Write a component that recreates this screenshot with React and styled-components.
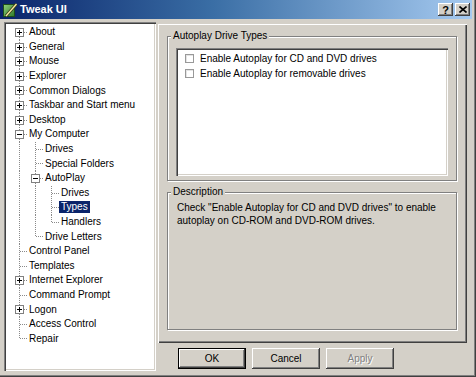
import React from "react";
import styled, { createGlobalStyle, css } from "styled-components";

const ROW_H = 14.6;
const FONT = `"Liberation Sans", Arial, sans-serif`;

const GlobalStyle = createGlobalStyle`
  html, body {
    margin: 0;
    padding: 0;
    background: #d4d0c8;
  }
  body {
    font-family: ${FONT};
    font-size: 10px;
    color: #000;
  }
`;

const Window = styled.div`
  width: 476px;
  height: 377px;
  box-sizing: border-box;
  background: #d4d0c8;
  display: flex;
  flex-direction: column;
  padding: 0 4px 3px 0;
  box-shadow: inset -1px -1px 0 #404040, inset -2px -2px 0 #808080;
`;

const TitleBar = styled.div`
  height: 19px;
  flex: none;
  display: flex;
  align-items: center;
  gap: 2px;
  padding: 0 2px 0 2px;
  background: linear-gradient(to right, #0a246a 0%, #3a6ea5 45%, #a6caf0 100%);
`;

const TitleText = styled.div`
  flex: 1;
  color: #fff;
  font-weight: bold;
  font-size: 11px;
  line-height: 13px;
`;

const CaptionButton = styled.button`
  width: 15px;
  height: 13px;
  padding: 0;
  border: none;
  background: #d4d0c8;
  display: flex;
  align-items: center;
  justify-content: center;
  font: bold 11px ${FONT};
  color: #000;
  box-shadow: inset -1px -1px 0 #404040, inset 1px 1px 0 #fff,
    inset -2px -2px 0 #808080;
`;

const Body = styled.div`
  flex: 1;
  display: flex;
  gap: 2px;
  padding: 3px 0 3px 4px;
  min-height: 0;
`;

const TreePanel = styled.div`
  width: 152px;
  flex: none;
  box-sizing: border-box;
  background: #fff;
  padding: 3px 0 0 7px;
  box-shadow: inset 1px 1px 0 #808080, inset 2px 2px 0 #404040,
    inset -1px -1px 0 #fff, inset -2px -2px 0 #d4d0c8;
  overflow: hidden;
`;

const Row = styled.div`
  display: flex;
  align-items: center;
  height: ${ROW_H}px;
`;

const Cell = styled.svg`
  flex: none;
  display: block;
  overflow: visible;
`;

const Label = styled.span`
  padding: 0 2px;
  line-height: 12px;
  white-space: nowrap;
  ${({ $selected }) =>
    $selected &&
    css`
      background: #0a246a;
      color: #fff;
    `}
`;

const RightColumn = styled.div`
  flex: 1;
  display: flex;
  flex-direction: column;
  margin-right: 5px;
`;

const Frame = styled.div`
  flex: 1;
  margin-top: 2px;
  display: flex;
  flex-direction: column;
  padding: 12px 10px 13px 9px;
  box-shadow: inset 1px 1px 0 #fff, inset -1px -1px 0 #404040,
    inset -2px -2px 0 #808080;
`;

const Group = styled.div`
  border: 1px solid #808080;
  box-shadow: inset 1px 1px 0 #fff, 1px 1px 0 #fff;
  display: flex;
  flex-direction: column;
  ${({ $grow }) => $grow && "flex: 1;"}
  ${({ $gap }) => $gap && `margin-top: ${$gap}px;`}
`;

const Legend = styled.div`
  align-self: flex-start;
  margin: -7px 0 0 3px;
  padding: 0 2px;
  line-height: 12px;
  background: #d4d0c8;
`;

const ListBox = styled.div`
  height: 128px;
  margin: 6px 8px 4px 8px;
  box-sizing: border-box;
  background: #fff;
  padding: 3px 0 0 9px;
  box-shadow: inset 1px 1px 0 #808080, inset 2px 2px 0 #404040,
    inset -1px -1px 0 #fff, inset -2px -2px 0 #d4d0c8;
`;

const CheckRow = styled.label`
  display: flex;
  align-items: center;
  gap: 6px;
  height: 15px;
`;

const CheckBox = styled.span`
  width: 9px;
  height: 9px;
  box-sizing: border-box;
  border: 1px solid #999;
  background: #fff;
  box-shadow: inset 1px 1px 0 #e4e4e4;
`;

const Description = styled.p`
  margin: 3px 9px 0 9px;
  line-height: 13px;
`;

const ButtonRow = styled.div`
  display: flex;
  gap: 6px;
  padding-left: 20px;
  margin: 5px 0 2px 0;
`;

const Button = styled.button`
  width: 68px;
  height: 21px;
  box-sizing: border-box;
  padding: 0;
  border: none;
  background: #d4d0c8;
  font: 10px ${FONT};
  color: #000;
  box-shadow: inset -1px -1px 0 #404040, inset 1px 1px 0 #fff,
    inset -2px -2px 0 #808080;
  ${({ $default }) =>
    $default &&
    css`
      border: 1px solid #000;
    `}
  &:disabled {
    color: #808080;
    text-shadow: 1px 1px 0 #fff;
  }
`;

const tree = [
  { label: "About", more: true },
  { label: "General", more: true },
  { label: "Mouse", more: true },
  { label: "Explorer", more: true },
  { label: "Common Dialogs", more: true },
  { label: "Taskbar and Start menu", more: true },
  { label: "Desktop", more: true },
  {
    label: "My Computer",
    open: [
      { label: "Drives" },
      { label: "Special Folders" },
      {
        label: "AutoPlay",
        open: [
          { label: "Drives" },
          { label: "Types", selected: true },
          { label: "Handlers" },
        ],
      },
      { label: "Drive Letters" },
    ],
  },
  { label: "Control Panel" },
  { label: "Templates" },
  { label: "Internet Explorer", more: true },
  { label: "Command Prompt" },
  { label: "Logon", more: true },
  { label: "Access Control" },
  { label: "Repair" },
];

const flatten = (nodes, guides = [], out = []) => {
  nodes.forEach((n, i) => {
    const last = i === nodes.length - 1;
    out.push({ ...n, guides, first: guides.length === 0 && i === 0, last });
    if (n.open) flatten(n.open, [...guides, !last], out);
  });
  return out;
};

const dots = {
  stroke: "#8a8a8a",
  strokeWidth: 1,
  strokeDasharray: "1 1",
  shapeRendering: "crispEdges",
};

const Guide = ({ on }) => (
  <Cell width="16" height={ROW_H}>
    {on && <line x1="8.5" y1="0" x2="8.5" y2={ROW_H} {...dots} />}
  </Cell>
);

const Connector = ({ up, down, box, open }) => {
  const c = 7.5;
  return (
    <Cell width="16" height={ROW_H}>
      {up && <line x1="8.5" y1="0" x2="8.5" y2={box ? 3 : c} {...dots} />}
      {down && <line x1="8.5" y1={box ? 12 : c} x2="8.5" y2={ROW_H} {...dots} />}
      <line x1={box ? 13 : 9} y1={c} x2="16" y2={c} {...dots} />
      {box && (
        <g shapeRendering="crispEdges">
          <rect x="4.5" y="3.5" width="8" height="8" fill="#fff" stroke="#808080" />
          <line x1="6" y1={c} x2="11" y2={c} stroke="#000" />
          {!open && <line x1="8.5" y1="5" x2="8.5" y2="10" stroke="#000" />}
        </g>
      )}
    </Cell>
  );
};

const AppIcon = () => (
  <svg width="16" height="16" viewBox="0 0 16 16">
    <defs>
      <linearGradient id="tw" x1="0" y1="0" x2="1" y2="1">
        <stop offset="0" stopColor="#8fd07a" />
        <stop offset="1" stopColor="#2f7a2a" />
      </linearGradient>
    </defs>
    <rect x="1.5" y="2.5" width="11" height="12" fill="url(#tw)" stroke="#1e4d1a" />
    <line x1="4" y1="14" x2="14.5" y2="2" stroke="#3a3a1a" strokeWidth="3" />
    <line x1="4" y1="14" x2="14.5" y2="2" stroke="#f6eea0" strokeWidth="1.4" />
  </svg>
);

const CloseGlyph = () => (
  <svg width="8" height="7" viewBox="0 0 8 7">
    <path d="M0.5 0.5 L7.5 6.5 M7.5 0.5 L0.5 6.5" stroke="#000" strokeWidth="1.6" />
  </svg>
);

const App = () => {
  const rows = flatten(tree);
  return (
    <>
      <GlobalStyle />
      <Window>
        <TitleBar>
          <AppIcon />
          <TitleText>Tweak UI</TitleText>
          <CaptionButton>?</CaptionButton>
          <CaptionButton>
            <CloseGlyph />
          </CaptionButton>
        </TitleBar>
        <Body>
          <TreePanel>
            {rows.map((r, i) => (
              <Row key={i}>
                {r.guides.map((g, j) => (
                  <Guide key={j} on={g} />
                ))}
                <Connector
                  up={!r.first}
                  down={!r.last}
                  box={r.more || !!r.open}
                  open={!!r.open}
                />
                <Label $selected={r.selected}>{r.label}</Label>
              </Row>
            ))}
          </TreePanel>
          <RightColumn>
            <Frame>
              <Group>
                <Legend>Autoplay Drive Types</Legend>
                <ListBox>
                  <CheckRow>
                    <CheckBox />
                    Enable Autoplay for CD and DVD drives
                  </CheckRow>
                  <CheckRow>
                    <CheckBox />
                    Enable Autoplay for removable drives
                  </CheckRow>
                </ListBox>
              </Group>
              <Group $grow $gap={11}>
                <Legend>Description</Legend>
                <Description>
                  Check "Enable Autoplay for CD and DVD drives" to enable autoplay on
                  CD-ROM and DVD-ROM drives.
                </Description>
              </Group>
            </Frame>
            <ButtonRow>
              <Button $default>OK</Button>
              <Button>Cancel</Button>
              <Button disabled>Apply</Button>
            </ButtonRow>
          </RightColumn>
        </Body>
      </Window>
    </>
  );
};

export default App;
